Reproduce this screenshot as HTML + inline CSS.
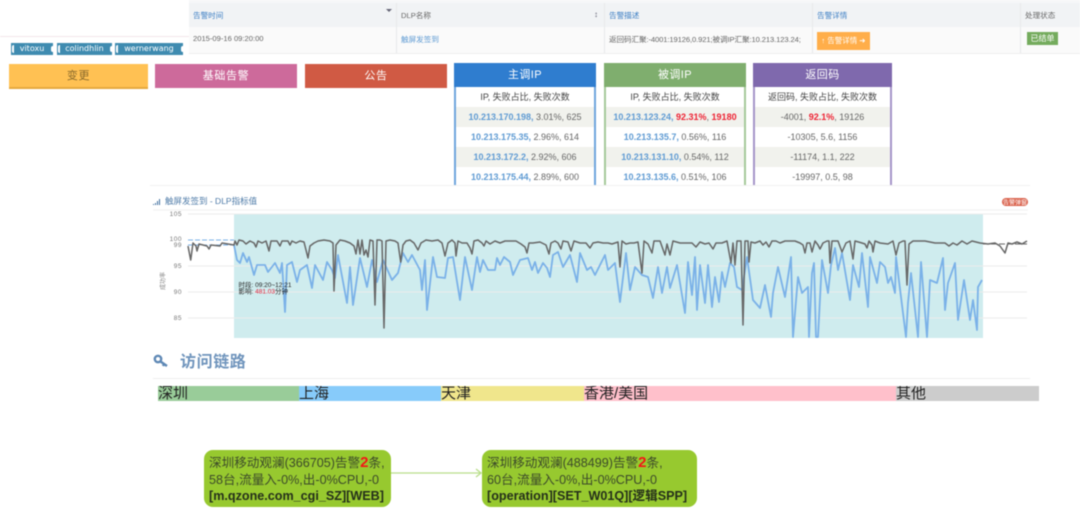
<!DOCTYPE html>
<html><head><meta charset="utf-8">
<style>
html,body{margin:0;padding:0;background:#fff}
body{width:1080px;height:514px;position:relative;overflow:hidden;font-family:"Liberation Sans","Noto Sans CJK SC",sans-serif;color:#555}
#w{position:absolute;left:0;top:0;width:1080px;height:514px;overflow:hidden;filter:blur(.4px);background:#fff}
.a{position:absolute;white-space:nowrap}
.btn{position:absolute;top:64px;height:24px;line-height:24px;text-align:center;font-size:11px;letter-spacing:.6px;color:#fff;box-sizing:border-box}
.tag{position:absolute;top:43px;height:12px;line-height:12px;background:#3f8bb0;color:#fff;font-family:"DejaVu Sans",sans-serif;font-size:8px;text-align:center}
.tag:before{content:"";position:absolute;left:1px;top:2px;width:2px;height:8px;background:#fff;border-radius:2px 0 0 2px}
.tag:after{content:"";position:absolute;right:0;top:3px;width:2px;height:6px;background:#fff;border-radius:2px 0 0 2px}
.p{position:absolute;top:63px;height:122px;box-sizing:border-box;overflow:hidden;text-align:center;font-size:9px;color:#666}
.p .h{height:24px;line-height:24px;color:#fff;font-size:11px;letter-spacing:.4px}
.p .r{height:20px;line-height:20px;border-left:2px solid;border-right:2px solid;border-color:inherit}
.p .r:first-of-type{height:21px}
.p .g{background:#f1f2ed}
.p b{color:#5f9bd3;font-weight:bold}
.p i{color:#ee2233;font-style:normal;font-weight:bold}
.p .t{color:#444}
.th{position:absolute;top:10px;font-size:7.6px;color:#3d7fc4}
.td{position:absolute;top:34px;font-size:7.6px;color:#666}
.bar{position:absolute;top:386px;height:15px;line-height:15px;font-size:15px;color:#222;overflow:hidden}
.node{position:absolute;top:450px;height:57px;border-radius:9px;background:#97c92f;color:#3c4a2a;font-size:12.6px;line-height:16.5px;padding:5px 0 0 5px;box-sizing:border-box;white-space:nowrap}
.node u{text-decoration:none;color:#f31616;font-weight:bold;font-size:15px;line-height:12px}
.node b{color:#25301a}
</style></head><body>
<div id="w">

<!-- table -->
<div class="a" style="left:189px;top:0;width:891px;height:3px;background:#f6f7f8"></div>
<div class="a" style="left:189px;top:3px;width:891px;height:24px;background:#f1f3f5"></div>
<div class="a" style="left:189px;top:27px;width:891px;height:26px;background:#fafafa;border-bottom:1px solid #eee"></div>
<div class="a" style="left:396px;top:3px;width:1px;height:50px;background:#e8e9ea"></div>
<div class="a" style="left:604px;top:3px;width:1px;height:50px;background:#e8e9ea"></div>
<div class="a" style="left:812px;top:3px;width:1px;height:50px;background:#e8e9ea"></div>
<div class="a" style="left:1020px;top:3px;width:1px;height:50px;background:#e8e9ea"></div>
<div class="th" style="left:193px">告警时间</div>
<div class="a" style="left:386px;top:9px;width:0;height:0;border:3px solid transparent;border-top:3px solid #667;"></div>
<div class="th" style="left:401px;color:#666">DLP名称</div>
<div class="a" style="left:594px;top:10px;font-size:8px;color:#667">&#8597;</div>
<div class="th" style="left:609px">告警描述</div>
<div class="th" style="left:817px">告警详情</div>
<div class="th" style="left:1025px;color:#666">处理状态</div>
<div class="td" style="left:193px">2015-09-16 09:20:00</div>
<div class="td" style="left:401px;color:#5f9bd3">触屏发签到</div>
<div class="td" style="left:609px;letter-spacing:-.1px">返回码汇聚:-4001:19126,0.921;被调IP汇聚:10.213.123.24;</div>
<div class="a" style="left:817px;top:32px;width:53px;height:18px;line-height:18px;background:#ffae4a;color:#fff;font-size:7.5px;text-align:center">↑ 告警详情 ➜</div>
<div class="a" style="left:1027px;top:32px;width:31px;height:13px;line-height:13px;background:#74ab5d;color:#fff;font-size:8px;text-align:center">已结单</div>

<div class="a" style="left:0;top:36px;width:189px;height:1px;background:#f3e6ea"></div>
<!-- tags -->
<div class="tag" style="left:11px;width:42px">vitoxu</div>
<div class="tag" style="left:57px;width:55px">colindhlin</div>
<div class="tag" style="left:115px;width:68px">wernerwang</div>

<!-- buttons -->
<div class="btn" style="left:9px;width:139px;height:25px;background:#ffc153;color:#8a6a2c;border-bottom:2px solid #e6a93e">变更</div>
<div class="btn" style="left:155px;width:142px;background:#cd6a9b">基础告警</div>
<div class="btn" style="left:305px;width:142px;background:#d05a44">公告</div>

<!-- panels -->
<div class="p" style="left:454px;width:142px;border-color:#6fa5dc">
<div class="h" style="background:#2f7dcf">主调IP</div>
<div class="r t">IP, 失败占比, 失败次数</div>
<div class="r g"><b>10.213.170.198,</b> 3.01%, 625</div>
<div class="r"><b>10.213.175.35,</b> 2.96%, 614</div>
<div class="r g"><b>10.213.172.2,</b> 2.92%, 606</div>
<div class="r"><b>10.213.175.44,</b> 2.89%, 600</div>
</div>
<div class="p" style="left:604px;width:142px;border-color:#a5c99a">
<div class="h" style="background:#7fae6e">被调IP</div>
<div class="r t">IP, 失败占比, 失败次数</div>
<div class="r g"><b>10.213.123.24,</b> <i>92.31%</i>, <i>19180</i></div>
<div class="r"><b>10.213.135.7,</b> 0.56%, 116</div>
<div class="r g"><b>10.213.131.10,</b> 0.54%, 112</div>
<div class="r"><b>10.213.135.6,</b> 0.51%, 106</div>
</div>
<div class="p" style="left:753px;width:139px;border-color:#a595c8">
<div class="h" style="background:#7f69ad">返回码</div>
<div class="r t">返回码, 失败占比, 失败次数</div>
<div class="r g">-4001, <i>92.1%</i>, 19126</div>
<div class="r">-10305, 5.6, 1156</div>
<div class="r g">-11174, 1.1, 222</div>
<div class="r">-19997, 0.5, 98</div>
</div>
<div class="a" style="left:150px;top:185px;width:880px;height:1px;background:#f1f1f1"></div>

<!-- chart -->
<svg class="a" style="left:0;top:0" width="1080" height="514" viewBox="0 0 1080 514" font-family="Liberation Sans,Noto Sans CJK SC,sans-serif">
<line x1="153" y1="210" x2="1028" y2="210" stroke="#f0f0f0"/>
<rect x="234" y="214" width="749" height="124" fill="#cfecee"/>
<g stroke="#ececec"><line x1="188" y1="214" x2="1027" y2="214"/><line x1="188" y1="266" x2="1027" y2="266"/><line x1="188" y1="292" x2="1027" y2="292"/><line x1="188" y1="318" x2="1027" y2="318"/></g>
<path d="M153 205h1v-1h-1zM155 205h1v-2h-1zM157 205h1v-4h-1zM159 205h1v-6h-1z" fill="#3f6f9f"/>
<text x="165" y="204" font-size="8.500" fill="#4e7ba8">触屏发签到 - DLP指标值</text>
<rect x="1002" y="198" width="26" height="8" rx="4" fill="#d9604a"/>
<text x="1015" y="204.500" font-size="6" fill="#fff" text-anchor="middle">告警弹窗</text>
<g font-size="6.500" fill="#777" text-anchor="end" letter-spacing=".5"><text x="182" y="216">105</text><text x="182" y="241">100</text><text x="182" y="247">99</text><text x="182" y="268">95</text><text x="182" y="294">90</text><text x="182" y="320">85</text></g>
<text transform="translate(165 290) rotate(-90)" font-size="6" fill="#888">成功率</text>
<path d="M188 240H234M188 245H234" stroke="#7ab1e8" stroke-width="1" stroke-dasharray="5 2"/>
<path d="M983 244H1027" stroke="#666" stroke-width="1" stroke-dasharray="6 2"/>
<svg x="0" y="0" width="1080" height="338" viewBox="0 0 1080 338">
<g fill="none" stroke-linejoin="round">
<polyline stroke="#7ab1e8" stroke-width="1.800" points="234,245 237,260 240,263 243,253 247,262 249,257 254,275 257,265 265,265 268,272 275,263 280,273 282,263 285,312 287,265 292,262 297,282 300,270 307,265 312,288 315,265 323,280 327,262 332,270 335,278 338,255 347,303 350,267 353,305 360,258 367,287 372,260 377,282 383,260 392,280 398,273 403,253 408,262 412,255 420,270 422,290 425,260 427,310 433,257 437,277 445,278 448,258 453,257 460,300 465,257 472,290 477,257 480,272 483,260 488,270 495,270 497,258 500,265 504,257 510,262 513,275 520,260 528,258 532,270 535,262 538,273 543,263 547,268 550,277 553,255 558,252 563,267 570,255 577,282 580,253 587,270 591,267 595,275 605,255 608,270 615,263 620,302 626,253 630,290 635,267 642,275 648,277 653,298 658,267 662,293 667,267 670,288 677,265 685,313 688,262 692,295 695,257 697,310 700,265 705,303 708,265 712,307 715,277 719,302 722,272 725,287 730,263 734,267 737,287 742,290 747,257 753,300 760,308 765,285 771,317 773,293 778,267 785,297 791,257 793,337 798,277 802,293 808,287 809,337 812,273 814,263 816,337 818,337 822,260 828,293 831,265 835,248 838,270 842,253 850,300 853,265 859,287 862,253 868,307 870,257 877,283 880,262 885,267 888,283 891,277 895,293 896,257 906,337 908,303 911,273 918,337 921,262 927,337 930,280 937,283 943,258 945,310 948,283 955,263 958,320 964,280 970,320 973,300 977,330 978,287 982,280"/>
<polyline stroke="#666" stroke-width="1.500" points="188,246 190.700,260 193,243 196,246 197,251 199,244 203,245 207,246 209,249 211,245 220,246 222,243 234,245 235,241 237,245 239,240 243,241 246,244 250,241 254,243 256,247 258,241 262,243 266,241 269,251 271,241 277,241 280,246 282,241 288,241 290,245 292,241 296,243 300,241 304,242 306,250 308,258 310,246 314,243 318,241 324,240 330,241 333,243 334,291 336,245 340,240 345,241 350,243 354,246 356,254 358,240 360,254 362,240 364,255 366,250 368,257 370,240 373,241 375,305 377,240 380,240 382,241 384,328 386,241 390,240 395,241 398,243 400.700,262 403,245 406,241 410,240 414,243 418,250 421,243 426,240 432,241 438,240 442,243 445,256 448,243 452,240 455,243 456,256 458,241 462,243 467,243 470,248 472,254 474,241 478,240 482,243 484,246 486,241 490,244 495,241 500,243 505,241 510,241 516,241 521,244 525,247 527,253 529,243 533,243 540,242 546,245 549,254 551,243 555,241 558,243 561,249 563,241 568,242 571,251 574,241 580,243 586,243 590,248 593,243 598,242 603,243 608,243 612,244 618,242 620,267 622,241 626,244 630,243 634,243 638,242 642,273 644,241 648,244 652,253 654,241 660,241 665,255 667,244 670,255 673,241 680,243 686,243 692,243 696,247 700,242 705,244 709,243 713,249 716,243 722,243 727,241 731,263 733,243 735,265 737,241 741,241 743,325 745,241 748,241 749,262 751,242 755,243 760,241 763,245 766,242 769,247 772,241 776,241 780,243 785,241 795,241 800,243 803,245 805,253 807,243 810,243 812,252 815,241 818,245 820,249 823,243 827,241 829,241 830,263 832,241 838,241 842,252 846,243 850,241 853,259 855,241 862,243 865,244 867,248 869,241 872,245 873,252 875,241 880,243 888,244 893,241 896,255 899,243 903,241 905,241 907,285 909,244 913,241 925,241 935,243 938,243 945,243 949,246 953,243 957,245 962,241 967,244 972,241 980,243 988,244 995,243 1000,246 1005,253 1008,243 1012,244 1017,242 1022,244 1027,241"/>
</g></svg>
<g font-size="6.500" fill="#222"><text x="238.500" y="287">时段: 09:20~12:21</text><text x="238.500" y="293.500">影响: <tspan fill="#e0243a">481.03</tspan>分钟</text></g>
<!-- key icon -->
<g fill="none" stroke="#5e88b5"><circle cx="158" cy="359" r="3.200" stroke-width="2.400"/><path d="M160.500 361.500l6.500 4.500M164 364l-1 2" stroke-width="2.400"/></g>
<!-- link -->
<path d="M391 473H481M476 469l5 4-5 4" fill="none" stroke="#b9de8a" stroke-width="1.300"/>
</svg>

<div class="a" style="left:180px;top:348px;font-size:16px;font-weight:bold;color:#6f94bc;letter-spacing:.6px">访问链路</div>
<div class="a" style="left:153px;top:378px;width:877px;height:1px;background:#eee"></div>

<div class="bar" style="left:158px;width:141px;background:#99cc99">深圳</div>
<div class="bar" style="left:299px;width:142px;background:#87cbfa">上海</div>
<div class="bar" style="left:441px;width:143px;background:#f0e68c">天津</div>
<div class="bar" style="left:584px;width:312px;background:#ffc0cb">香港/美国</div>
<div class="bar" style="left:896px;width:143px;background:#cccccc">其他</div>

<div class="node" style="left:204px;width:187px">深圳移动观澜(366705)告警<u>2</u>条,<br>58台,流量入-0%,出-0%CPU,-0<br><b>[m.qzone.com_cgi_SZ][WEB]</b></div>
<div class="node" style="left:482px;width:215px">深圳移动观澜(488499)告警<u>2</u>条,<br>60台,流量入-0%,出-0%CPU,-0<br><b>[operation][SET_W01Q][逻辑SPP]</b></div>

</div>
</body></html>
